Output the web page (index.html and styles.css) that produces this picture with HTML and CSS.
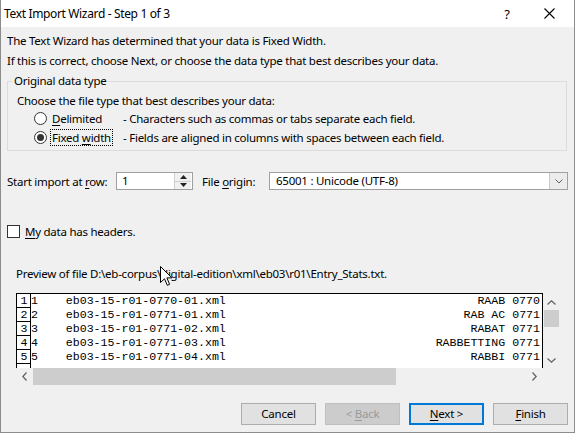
FILE: index.html
```html
<!DOCTYPE html>
<html>
<head>
<meta charset="utf-8">
<link rel="stylesheet" href="styles.css">
</head>
<body>
<div class="window">
  <div class="titlebar">
    <span class="title">Text Import Wizard - Step 1 of 3</span>
    <span class="help">?</span>
    <span class="close"><svg width="11" height="11" viewBox="0 0 11 11"><path d="M0.5 0.5 L10.5 10.5 M10.5 0.5 L0.5 10.5" stroke="#000" stroke-width="1.1" fill="none"/></svg></span>
  </div>
  <div class="content">
    <div class="intro">The Text Wizard has determined that your data is Fixed Width.</div>
    <div class="intro">If this is correct, choose Next, or choose the data type that best describes your data.</div>
    <fieldset class="group">
      <legend>Original data type</legend>
      <div class="choose">Choose the file type that best describes your data:</div>
      <div class="opt">
        <span class="radio"></span>
        <span class="optcell"><span class="optlabel"><u>D</u>elimited</span></span>
        <span class="desc">- Characters such as commas or tabs separate each field.</span>
      </div>
      <div class="opt">
        <span class="radio"><span class="dot"></span></span>
        <span class="optcell"><span class="optlabel focus">Fixed <u>w</u>idth</span></span>
        <span class="desc">- Fields are aligned in columns with spaces between each field.</span>
      </div>
    </fieldset>
    <div class="startrow">
      <span class="lbl">Start import at <u>r</u>ow:</span>
      <span class="spin">
        <span class="spinval">1</span>
        <span class="spinbtns">
          <span class="sb"><svg width="7" height="4" viewBox="0 0 7 4"><path d="M0 4 L3.5 0 L7 4 Z" fill="#222"/></svg></span>
          <span class="sb sb2"><svg width="7" height="4" viewBox="0 0 7 4"><path d="M0 0 L3.5 4 L7 0 Z" fill="#222"/></svg></span>
        </span>
      </span>
      <span class="lbl origin">File <u>o</u>rigin:</span>
      <span class="select">
        <span class="selval">65001 : Unicode (UTF-8)</span>
        <span class="selbtn"><svg width="8" height="5" viewBox="0 0 8 5"><path d="M0.5 0.5 L4 4 L7.5 0.5" stroke="#606060" fill="none"/></svg></span>
      </span>
    </div>
    <div class="checkrow">
      <span class="checkbox"></span>
      <span class="lbl"><u>M</u>y data has headers.</span>
    </div>
    <div class="previewlbl">Preview of file D:\eb-corpus\digital-edition\xml\eb03\r01\Entry_Stats.txt.</div>
    <div class="preview">
      <div class="data">
        <div class="row"><span class="num">1</span><span class="left">1    eb03-15-r01-0770-01.xml</span><span class="right">RAAB 0770</span></div>
        <div class="row"><span class="num">2</span><span class="left">2    eb03-15-r01-0771-01.xml</span><span class="right">RAB AC 0771</span></div>
        <div class="row"><span class="num">3</span><span class="left">3    eb03-15-r01-0771-02.xml</span><span class="right">RABAT 0771</span></div>
        <div class="row"><span class="num">4</span><span class="left">4    eb03-15-r01-0771-03.xml</span><span class="right">RABBETTING 0771</span></div>
        <div class="row"><span class="num">5</span><span class="left">5    eb03-15-r01-0771-04.xml</span><span class="right">RABBI 0771</span></div>
        <div class="row"><span class="num"></span></div>
      </div>
      <div class="vscroll">
        <span class="arrow"><svg width="9" height="5" viewBox="0 0 9 5"><path d="M0.5 4.5 L4.5 0.8 L8.5 4.5" stroke="#606060" stroke-width="1.2" fill="none"/></svg></span>
        <span class="vthumb"></span>
        <span class="vtrack"></span>
        <span class="arrow"><svg width="9" height="5" viewBox="0 0 9 5"><path d="M0.5 0.5 L4.5 4.2 L8.5 0.5" stroke="#606060" stroke-width="1.2" fill="none"/></svg></span>
      </div>
      <div class="hscroll">
        <span class="harrow"><svg width="5" height="9" viewBox="0 0 5 9"><path d="M4.5 0.5 L0.8 4.5 L4.5 8.5" stroke="#606060" stroke-width="1.2" fill="none"/></svg></span>
        <span class="hthumb"></span>
        <span class="htrack"></span>
        <span class="harrow"><svg width="5" height="9" viewBox="0 0 5 9"><path d="M0.5 0.5 L4.2 4.5 L0.5 8.5" stroke="#606060" stroke-width="1.2" fill="none"/></svg></span>
      </div>
      <div class="corner"></div>
    </div>
    <div class="buttons">
      <button class="btn">Cancel</button>
      <button class="btn disabled">&lt; <u>B</u>ack</button>
      <button class="btn default"><u>N</u>ext &gt;</button>
      <button class="btn"><u>F</u>inish</button>
    </div>
  </div>
  <svg class="cursor" width="13" height="21" viewBox="0 0 13 21"><path d="M0.5 0.5 V16.5 L4.5 12.8 L7.3 19.3 L9.6 18.3 L6.9 11.9 H11.8 Z" fill="#fff" stroke="#000" stroke-width="1" stroke-linejoin="miter"/></svg>
</div>
</body>
</html>
```
FILE: styles.css
```css
* { box-sizing: border-box; }
html, body { margin: 0; padding: 0; }
body {
  width: 575px;
  height: 433px;
  overflow: hidden;
  background: #f0f0f0;
  font-family: "Noto Sans", "Open Sans", sans-serif;
  font-size: 11.5px;
  letter-spacing: -0.25px;
  color: #000;
}
u { text-decoration: underline; text-underline-offset: 2px; text-decoration-thickness: 1px; }

.window {
  position: relative;
  width: 575px;
  height: 433px;
  border: 1px solid #8c8c8c;
  border-top: none;
  background: #f0f0f0;
  display: flex;
  flex-direction: column;
}

.titlebar {
  height: 27px;
  background: #fff;
  display: flex;
  align-items: center;
  padding-left: 3px;
}
.title { flex: 1; font-size: 12px; letter-spacing: -0.35px; }
.help { width: 30px; text-align: center; font-size: 13px; }
.close { width: 46px; margin-left: 4px; margin-right: 2px; display: flex; justify-content: center; }

.content {
  flex: 1;
  display: flex;
  flex-direction: column;
  padding: 4px 6px 0 6px;
}
.intro { line-height: 19px; height: 19px; white-space: nowrap; }
.intro + .intro { margin-top: 1px; }

.group {
  margin: 3px 1px 0 0;
  padding: 0 0 3px 0;
  border: 1px solid #dcdcdc;
  min-width: 0;
}
.group legend {
  margin-left: 4px;
  padding: 0 2px;
  line-height: 16px;
}
.choose { padding-left: 9px; line-height: 16px; margin-top: 4px; }
.opt {
  display: flex;
  align-items: center;
  height: 19px;
  white-space: nowrap;
}
.radio {
  width: 13px;
  height: 13px;
  margin-left: 26px;
  margin-right: 3px;
  border: 1px solid #333;
  border-radius: 50%;
  background: #fff;
  display: flex;
  align-items: center;
  justify-content: center;
}
.dot { width: 7px; height: 7px; border-radius: 50%; background: #333; }
.optcell { width: 73px; display: flex; }
.optlabel {
  display: inline-block;
  height: 17px;
  line-height: 15px;
  padding: 0 1px;
  border: 1px dotted transparent;
}
.optlabel.focus { border-color: #000; }

.startrow {
  display: flex;
  align-items: center;
  height: 18px;
  margin-top: 21px;
  white-space: nowrap;
}
.startrow .lbl { width: 109px; }
.spin {
  width: 77px;
  height: 18px;
  border: 1px solid #a0a0a0;
  background: #fff;
  display: flex;
}
.spinval { flex: 1; padding-left: 5px; line-height: 16px; }
.spinbtns {
  width: 17px;
  margin: 0 1px 0 0;
  display: flex;
  flex-direction: column;
  background: #f0f0f0;
  border-left: 1px solid #d0d0d0;
}
.sb { flex: 1; display: flex; align-items: center; justify-content: center; }
.sb2 { border-top: 1px solid #d0d0d0; }
.startrow .origin { width: 67px; margin-left: 9px; }
.select {
  flex: 1;
  height: 18px;
  border: 1px solid #a0a0a0;
  background: #fff;
  display: flex;
}
.selval { flex: 1; padding-left: 6px; line-height: 16px; }
.selbtn {
  width: 18px;
  border-left: 1px solid #c8c8c8;
  background: #ececec;
  display: flex;
  align-items: center;
  justify-content: center;
}

.checkrow {
  display: flex;
  align-items: center;
  height: 13px;
  margin-top: 35px;
  white-space: nowrap;
}
.checkbox {
  width: 13px;
  height: 13px;
  border: 1px solid #333;
  background: #fff;
  margin-right: 5px;
}

.previewlbl {
  margin-top: 28px;
  padding-left: 9px;
  line-height: 16px;
  white-space: nowrap;
}

.preview {
  margin: 11px 8px 0 9px;
  display: grid;
  grid-template-columns: 1fr 17px;
  grid-template-rows: 75px 17px;
}
.data {
  border: 1px solid #000;
  border-bottom: none;
  background: #fff;
  overflow: hidden;
  font-family: "Liberation Mono", "Courier New", monospace;
  font-size: 11.6px;
  letter-spacing: 0;
}
.row {
  display: flex;
  height: 14px;
  line-height: 13px;
  white-space: pre;
}
.num {
  width: 14px;
  border-right: 1px solid #000;
  border-bottom: 1px solid #000;
  text-align: center;
  padding-left: 1px;
}
.right { margin-left: auto; padding-right: 2px; }

.vscroll {
  border-top: 1px solid #f0f0f0;
  background: #f0f0f0;
  display: flex;
  flex-direction: column;
}
.arrow { height: 16px; display: flex; align-items: center; justify-content: center; }
.vthumb { height: 17px; margin: 0 1px; background: #cdcdcd; }
.vtrack { flex: 1; }
.hscroll {
  background: #f0f0f0;
  display: flex;
}
.harrow { width: 17px; display: flex; align-items: center; justify-content: center; }
.hthumb { width: 363px; background: #cdcdcd; }
.htrack { flex: 1; }
.corner { background: #f0f0f0; }

.buttons {
  display: flex;
  justify-content: flex-end;
  gap: 9px;
  margin-top: 18px;
}
.btn {
  width: 75px;
  height: 22px;
  border: 1px solid #adadad;
  background: #e1e1e1;
  font-family: "Noto Sans", "Open Sans", sans-serif;
  font-size: 11.5px;
  letter-spacing: -0.25px;
  color: #000;
  padding: 0;
  margin: 0;
  line-height: 18px;
}
.btn.disabled { background: #cccccc; border-color: #bfbfbf; color: #9a9a9a; }
.btn.default { border: 2px solid #0078d7; }

.cursor { position: absolute; left: 159px; top: 266px; }
```
